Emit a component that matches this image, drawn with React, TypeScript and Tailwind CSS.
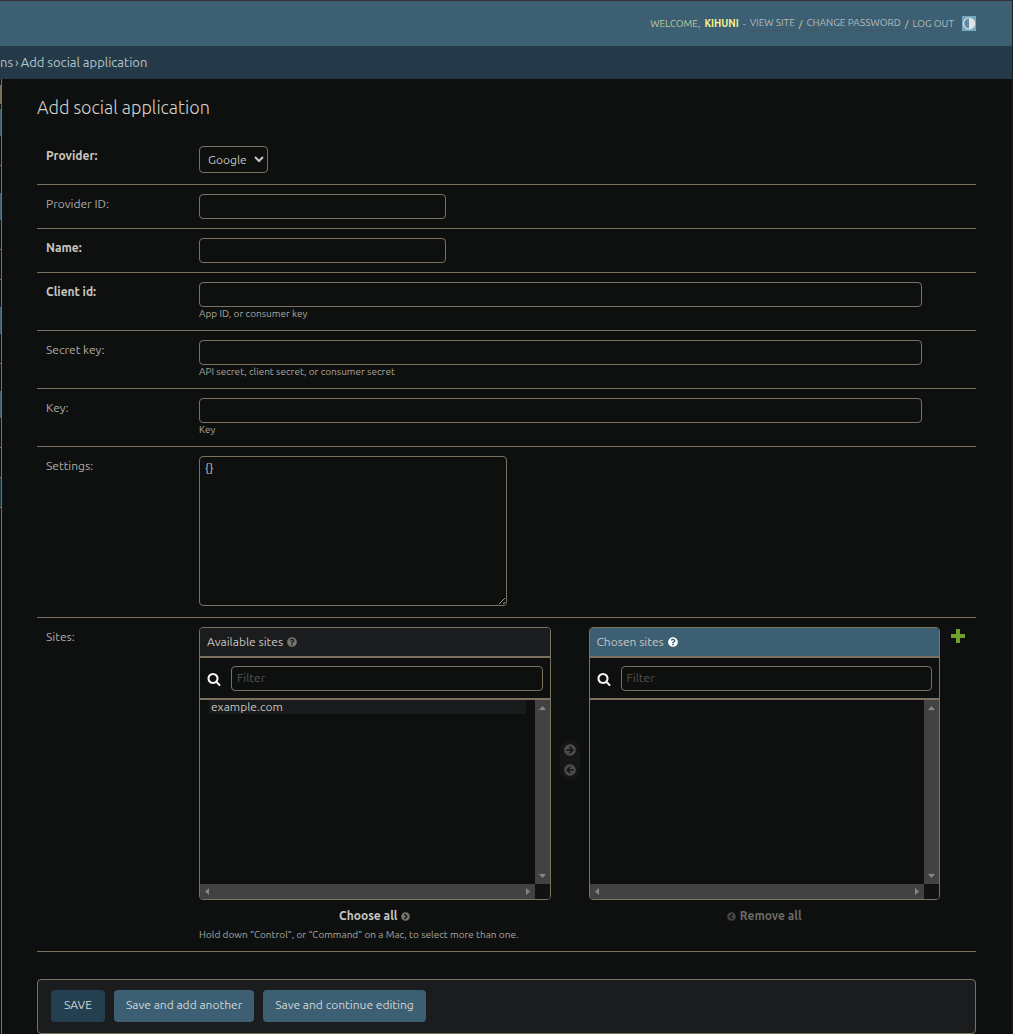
import type { ReactNode } from 'react';
import {
  FaArrowCircleLeft,
  FaArrowCircleRight,
  FaChevronCircleLeft,
  FaChevronCircleRight,
  FaQuestionCircle,
} from 'react-icons/fa';
import { clsx } from 'clsx';

const inputClass =
  'block h-[25px] rounded border border-[#7c7061] bg-[#0e100f] px-[5px] pb-[2px] text-xs text-[#c9c6c0] outline-none placeholder:text-[#55534f]';

const sidebarBlocks = [
  { height: 'h-[6px]', color: '' },
  { height: 'h-[19px]', color: 'bg-[#7c7061]' },
  { height: 'h-[5px]', color: '' },
  { height: 'h-[27px]', color: 'bg-[#3c5f73]' },
  { height: 'h-[30px]', color: 'border-b border-[#7c7061]' },
  { height: 'h-[27px]', color: '' },
  { height: 'h-[27px]', color: 'bg-[#3c5f73]' },
  { height: 'h-[30px]', color: 'border-b border-[#7c7061]' },
  { height: 'h-[30px]', color: 'border-b border-[#7c7061]' },
  { height: 'h-[27px]', color: '' },
  { height: 'h-[27px]', color: 'bg-[#3c5f73]' },
  { height: 'h-[30px]', color: 'border-b border-[#7c7061]' },
  { height: 'h-[27px]', color: '' },
  { height: 'h-[27px]', color: 'bg-[#3c5f73]' },
  { height: 'h-[30px]', color: 'border-b border-[#7c7061]' },
  { height: 'h-[30px]', color: 'border-b border-[#7c7061]' },
  { height: 'h-[30px]', color: 'border-b border-[#7c7061] bg-[#10363a]' },
];

function SearchIcon() {
  return (
    <svg viewBox="0 0 1792 1792" className="h-[14px] w-[14px] shrink-0 fill-[#f5f5f0]">
      <path d="M1216 832q0-185-131.5-316.5t-316.5-131.5-316.5 131.5-131.5 316.5 131.5 316.5 316.5 131.5 316.5-131.5 131.5-316.5zm512 832q0 52-38 90t-90 38q-54 0-90-38l-343-342q-179 124-399 124-143 0-273.5-55.5t-225-150-150-225-55.5-273.5 55.5-273.5 150-225 225-150 273.5-55.5 273.5 55.5 225 150 150 225 55.5 273.5q0 220-124 399l343 343q37 37 37 90z" />
    </svg>
  );
}

function ThemeIcon() {
  return (
    <svg viewBox="0 0 14 15" className="h-[15px] w-[14px]">
      <rect width="14" height="15" fill="#79a8c3" />
      <circle cx="7" cy="7.5" r="5.5" fill="#5f8da8" stroke="#e3e3dd" strokeWidth="1.2" />
      <path d="M7 2a5.5 5.5 0 0 1 0 11z" fill="#e3e3dd" />
    </svg>
  );
}

type FormRowProps = {
  id: string;
  label: string;
  required?: boolean;
  help?: string;
  children: ReactNode;
};

function FormRow({ id, label, required, help, children }: FormRowProps) {
  return (
    <div className="flex border-b border-[#7c7061] py-[9px] pl-[9px]">
      <label
        htmlFor={id}
        className={clsx(
          'w-[153px] shrink-0 pt-[2px] text-xs leading-4',
          required ? 'font-bold text-[#c9c6c0]' : 'text-[#b0ada5]',
        )}
      >
        {label}
      </label>
      <div className="min-w-0 flex-1">
        {children}
        {help && <p className="text-[10px] leading-[14px] text-[#a9a69c]">{help}</p>}
      </div>
    </div>
  );
}

function ScrollArrow({ d }: { d: string }) {
  return (
    <svg viewBox="0 0 15 15" className="h-[15px] w-[15px] fill-[#868686]">
      <path d={d} />
    </svg>
  );
}

type SelectorProps = {
  id: string;
  title: string;
  chosen?: boolean;
  options: string[];
  children: ReactNode;
};

function Selector({ id, title, chosen, options, children }: SelectorProps) {
  return (
    <div className="flex min-w-0 flex-1 flex-col">
      <div className="overflow-hidden rounded border border-[#7c7061]">
        <div
          className={clsx(
            'flex h-[28px] items-center gap-1 px-[7px] text-xs text-[#c9c6c0]',
            chosen ? 'bg-[#3c5f73]' : 'bg-[#1b1c1d]',
          )}
        >
          <label htmlFor={id}>{title}</label>
          <FaQuestionCircle size={10} className={chosen ? 'text-white' : 'text-[#77756f]'} />
        </div>
        <div className="flex items-center gap-[10px] border-y-2 border-[#7c7061] pt-[8px] pr-[7px] pb-[7px] pl-[7px]">
          <SearchIcon />
          <input
            type="text"
            placeholder="Filter"
            aria-label={`Filter ${title.toLowerCase()}`}
            className={clsx(inputClass, 'min-w-0 flex-1')}
          />
        </div>
        <div className="grid grid-cols-[1fr_15px] grid-rows-[184px_15px]">
          <select
            id={id}
            multiple
            className="block h-full w-full overflow-hidden bg-[#0e100f] px-[9px] text-xs text-[#c9c6c0] outline-none"
          >
            {options.map((option) => (
              <option key={option} className="bg-[#191a1c] px-[2px] pb-px leading-[15px]">
                {option}
              </option>
            ))}
          </select>
          <div className="flex flex-col justify-between bg-[#424242]">
            <ScrollArrow d="M4 10h7L7.500 6z" />
            <ScrollArrow d="M4 5h7L7.500 9z" />
          </div>
          <div className="flex justify-between bg-[#424242]">
            <ScrollArrow d="M9 4v7L5 7.500z" />
            <ScrollArrow d="M6 4v7L10 7.500z" />
          </div>
          <div className="bg-[#121212]" />
        </div>
      </div>
      {children}
    </div>
  );
}

export default function App() {
  return (
    <div className="flex min-h-screen flex-col border-t border-r border-t-[#333130] border-r-[#1d1d1d] bg-[#0e100f] font-['Ubuntu','Noto_Sans',sans-serif] text-[#c9c6c0]">
      <header className="flex h-[45px] items-center justify-end gap-2 bg-[#3c5f73] pr-9 text-[10px] text-[#b4bcbc] uppercase">
        <div className="flex items-center gap-1">
          <span className="text-[#c0cc9a]">Welcome,</span>
          <strong className="text-[#f5f391]">kihuni</strong>
          <span>-</span>
          <a href="#site" className="border-b border-[#425664] leading-[14px]">View site</a>
          <span className="text-[#d5d89a]">/</span>
          <a href="#password" className="border-b border-[#425664] leading-[14px]">Change password</a>
          <span className="text-[#d5d89a]">/</span>
          <button type="button" className="uppercase">Log out</button>
        </div>
        <button type="button" aria-label="Toggle theme">
          <ThemeIcon />
        </button>
      </header>

      <nav className="flex h-[33px] items-center gap-[2px] bg-[#253a48] text-[13px] text-[#b5c5cc]">
        <a href="#applications">ns</a>
        <span>›</span>
        <span>Add social application</span>
      </nav>

      <div className="flex flex-1">
        <aside className="w-[2px] shrink-0 border-r border-[#7c7061]">
          {sidebarBlocks.map((block, i) => (
            <div key={i} className={clsx(block.height, block.color)} />
          ))}
        </aside>

        <main className="min-w-0 flex-1 pr-9 pl-[35px]">
          <h1 className="pt-4 text-lg leading-6 font-light text-[#d5d2cc]">Add social application</h1>

          <form className="pt-[18px]" onSubmit={(e) => e.preventDefault()}>
            <FormRow id="provider" label="Provider:" required>
              <select
                id="provider"
                className="mb-[2px] block h-[27px] rounded border border-[#7c7061] bg-[#0e100f] px-1 text-xs text-[#c9c6c0]"
              >
                <option>Google</option>
              </select>
            </FormRow>
            <FormRow id="provider-id" label="Provider ID:">
              <input id="provider-id" type="text" className={clsx(inputClass, 'w-[247px]')} />
            </FormRow>
            <FormRow id="name" label="Name:" required>
              <input id="name" type="text" className={clsx(inputClass, 'w-[247px]')} />
            </FormRow>
            <FormRow id="client-id" label="Client id:" required help="App ID, or consumer key">
              <input id="client-id" type="text" className={clsx(inputClass, 'w-full max-w-[723px]')} />
            </FormRow>
            <FormRow id="secret" label="Secret key:" help="API secret, client secret, or consumer secret">
              <input id="secret" type="text" className={clsx(inputClass, 'w-full max-w-[723px]')} />
            </FormRow>
            <FormRow id="key" label="Key:" help="Key">
              <input id="key" type="text" className={clsx(inputClass, 'w-full max-w-[723px]')} />
            </FormRow>
            <FormRow id="settings" label="Settings:">
              <textarea
                id="settings"
                defaultValue="{}"
                className="mb-[2px] block h-[150px] w-[308px] rounded border border-[#7c7061] bg-[#0e100f] px-[5px] py-1 text-xs leading-[14px] text-[#c9c6c0] outline-none"
              />
            </FormRow>
            <FormRow id="sites-from" label="Sites:">
              <div className="flex items-start">
                <div className="flex min-w-0 max-w-[741px] flex-1 gap-[9px]">
                  <Selector id="sites-from" title="Available sites" options={['example.com']}>
                    <button
                      type="button"
                      className="mt-2 flex items-center gap-1 self-center text-xs leading-4 font-bold"
                    >
                      Choose all <FaChevronCircleRight size={9} className="text-[#77756f]" />
                    </button>
                  </Selector>
                  <div className="mt-[113px] flex h-10 w-5 shrink-0 flex-col items-center justify-around self-start rounded-full bg-[#151617] text-[#4c4b49]">
                    <button type="button" aria-label="Choose">
                      <FaArrowCircleRight size={12} />
                    </button>
                    <button type="button" aria-label="Remove">
                      <FaArrowCircleLeft size={12} />
                    </button>
                  </div>
                  <Selector id="sites-to" title="Chosen sites" chosen options={[]}>
                    <button
                      type="button"
                      className="mt-2 flex items-center gap-1 self-center text-xs leading-4 font-bold text-[#6b6965]"
                    >
                      <FaChevronCircleLeft size={9} className="text-[#454442]" /> Remove all
                    </button>
                  </Selector>
                </div>
                <a href="#add-site" aria-label="Add another site" className="mt-[2px] ml-[11px]">
                  <svg viewBox="0 0 14 14" className="h-[14px] w-[14px] fill-[#6f9f2c]">
                    <path d="M5 0h4v5h5v4H9v5H5V9H0V5h5z" />
                  </svg>
                </a>
              </div>
              <p className="mt-1 text-[10px] leading-[14px] text-[#a9a69c]">
                Hold down “Control”, or “Command” on a Mac, to select more than one.
              </p>
            </FormRow>

            <div className="mt-[27px] flex gap-[9px] rounded border border-[#7c7061] bg-[#1b1c1d] px-[13px] pt-[10px] pb-[11px] text-xs text-[#d3d6d6]">
              <button type="submit" className="h-8 min-w-[54px] rounded bg-[#243f50] px-3 pb-[2px]">SAVE</button>
              <button type="submit" className="h-8 rounded bg-[#3c5f73] px-3 pb-[2px]">Save and add another</button>
              <button type="submit" className="h-8 rounded bg-[#3c5f73] px-3 pb-[2px]">Save and continue editing</button>
            </div>
          </form>
        </main>
      </div>
    </div>
  );
}
